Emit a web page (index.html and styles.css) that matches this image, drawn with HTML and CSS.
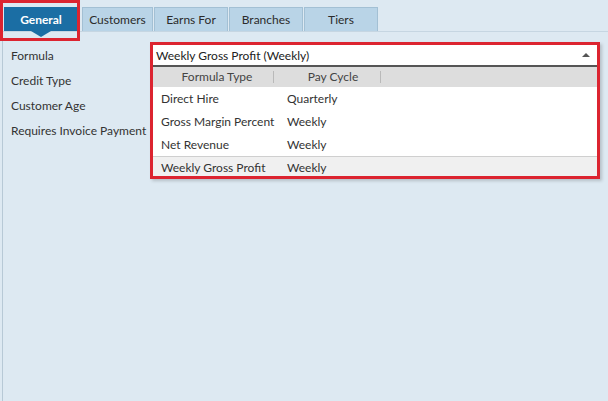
FILE: index.html
```html
<!DOCTYPE html>
<html>
<head>
<meta charset="utf-8">
<link rel="stylesheet" href="styles.css">
</head>
<body>
<div class="tabs">
  <div class="tab active">General</div>
  <div class="tab w71">Customers</div>
  <div class="tab">Earns For</div>
  <div class="tab">Branches</div>
  <div class="tab">Tiers</div>
  <div class="tab-mark"></div>
</div>
<div class="content">
  <div class="form">
    <div class="label">Formula</div>
    <div class="field">
      <div class="combo-input">
        <span>Weekly Gross Profit (Weekly)</span>
        <span class="arrow"></span>
      </div>
      <div class="popup">
        <div class="head">
          <div class="hc c1">Formula Type</div>
          <div class="hc c2">Pay Cycle</div>
        </div>
        <div class="row"><div class="c1">Direct Hire</div><div class="c2">Quarterly</div></div>
        <div class="row"><div class="c1">Gross Margin Percent</div><div class="c2">Weekly</div></div>
        <div class="row"><div class="c1">Net Revenue</div><div class="c2">Weekly</div></div>
        <div class="row sel"><div class="c1">Weekly Gross Profit</div><div class="c2">Weekly</div></div>
      </div>
      <div class="highlight"></div>
    </div>
    <div class="label">Credit Type</div>
    <div></div>
    <div class="label">Customer Age</div>
    <div></div>
    <div class="label">Requires Invoice Payment</div>
    <div></div>
  </div>
</div>
</body>
</html>
```
FILE: styles.css
```css
html, body {
  margin: 0;
  height: 100%;
}
body {
  background: #dde9f2;
  font-family: Lato, "Open Sans", sans-serif;
  font-size: 12px;
  color: #333;
  overflow: hidden;
}
.tabs {
  position: relative;
  display: flex;
  gap: 1px;
  padding: 7px 0 0 4px;
  height: 24px;
  border-bottom: 1px solid #c6d6e2;
}
.tab {
  box-sizing: border-box;
  width: 74px;
  height: 24px;
  background: #b9d4e7;
  border: 1px solid #a3c0d4;
  border-bottom: none;
  display: flex;
  align-items: center;
  justify-content: center;
  color: #2b2b2b;
}
.tab.w71 { width: 71px; }
.tab.active {
  position: relative;
  background: #1b6ea4;
  border-color: #1b6ea4;
  color: #fff;
  font-weight: bold;
  margin-right: 3px;
}
.tab.active::after {
  content: "";
  position: absolute;
  left: 26px;
  top: 23px;
  border-left: 10px solid transparent;
  border-right: 10px solid transparent;
  border-top: 6px solid #1b6ea4;
}
.tab-mark {
  position: absolute;
  left: 0;
  top: 0;
  width: 80px;
  height: 41px;
  box-sizing: border-box;
  border: 3px solid #dc2430;
  pointer-events: none;
}
.content {
  margin-left: 2px;
  border-left: 1px solid #b7c9d6;
  height: calc(100% - 32px);
  padding: 10px 11px 0 8px;
  box-sizing: border-box;
}
.form {
  display: grid;
  grid-template-columns: 142px 1fr;
  grid-auto-rows: 25px;
}
.label {
  line-height: 25px;
  margin-top: 1px;
  white-space: nowrap;
}
.field {
  position: relative;
  padding-top: 3px;
}
.combo-input {
  height: 20px;
  background: #fff;
  display: flex;
  align-items: center;
  justify-content: space-between;
  padding: 0 7px 0 3px;
  color: #222;
  border-bottom: 2px solid #555;
}
.arrow {
  width: 0;
  height: 0;
  border-left: 4px solid transparent;
  border-right: 4px solid transparent;
  border-bottom: 4px solid #555;
}
.popup {
  position: absolute;
  left: 0;
  right: 0;
  top: 25px;
  height: 109px;
  overflow: hidden;
  background: #fff;
}
.head {
  display: flex;
  height: 20px;
  background: #dddddd;
  align-items: center;
  color: #444;
}
.hc {
  text-align: center;
  box-sizing: border-box;
  border-right: 1px solid #b9b9b9;
  line-height: 12px;
  white-space: nowrap;
  flex-shrink: 0;
}
.hc.c1 { width: 121px; padding-left: 8px; }
.hc.c2 { width: 107px; padding-left: 12px; }
.row {
  display: flex;
  height: 23px;
  align-items: center;
  color: #333;
  white-space: nowrap;
}
.row .c1 { width: 121px; flex-shrink: 0; padding-left: 8px; box-sizing: border-box; }
.row .c2 { padding-left: 13px; }
.row.sel {
  background: #f0f0f0;
  border-top: 1px solid #cfcfcf;
  height: 21px;
}
.highlight {
  position: absolute;
  left: -3px;
  right: -3px;
  top: 0;
  height: 137px;
  box-sizing: border-box;
  border: 3px solid #dc2430;
  box-shadow: 2px 2px 3px rgba(0, 0, 0, 0.18);
  pointer-events: none;
}
```
